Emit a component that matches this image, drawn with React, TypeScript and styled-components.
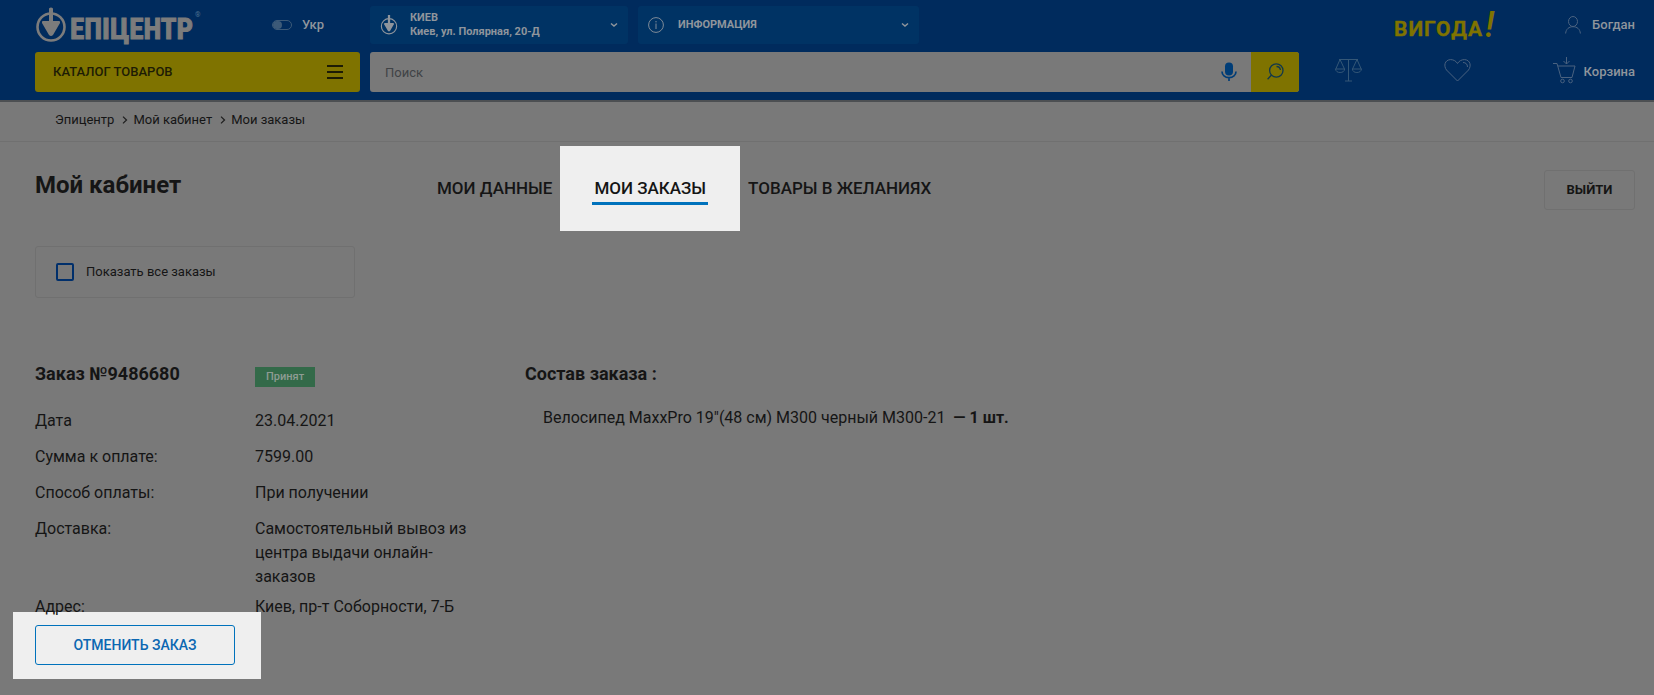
import React from "react";
import styled, { createGlobalStyle } from "styled-components";

const c = {
  page: "#797979",
  header: "#002b5d",
  panel: "#003364",
  yellow: "#7f7300",
  ink: "#151515",
  pale: "#8f959c",
  line: "#707070",
  blue: "#0072bc",
  lit: "#efefef",
};

const GlobalStyle = createGlobalStyle`
  * { box-sizing: border-box; }
  body {
    margin: 0;
    background: ${c.page};
    color: ${c.ink};
    font-family: Roboto, "Noto Sans", sans-serif;
    font-size: 16px;
    line-height: 24px;
  }
  a { color: inherit; text-decoration: none; }
  button, input { font: inherit; color: inherit; }
  svg { display: block; flex: none; overflow: visible; }
`;

const Header = styled.header`
  background: ${c.header};
  padding: 6px 19px 8px 35px;
  border-bottom: 2px solid #4c4f52;
`;

const HeaderRow = styled.div<{ $height: number }>`
  display: flex;
  align-items: center;
  gap: 10px;
  height: ${(p) => p.$height}px;
  & + & { margin-top: 8px; }
`;

const Brand = styled.div`
  width: 325px;
  flex: none;
  display: flex;
  align-items: center;
  justify-content: space-between;
  padding-right: 36px;
`;

const Language = styled.a`
  display: flex;
  align-items: center;
  gap: 10px;
  font-size: 13px;
  font-weight: 500;
  color: ${c.pale};
`;

const Toggle = styled.span`
  width: 20px;
  height: 10px;
  border: 1px solid #3c5a78;
  border-radius: 5px;
  &::before {
    content: "";
    display: block;
    width: 9px;
    height: 8px;
    border-radius: 5px;
    background: #3c5a78;
  }
`;

const HeaderPicker = styled.button<{ $width: number; $gap: number }>`
  width: ${(p) => p.$width}px;
  height: 38px;
  display: flex;
  align-items: center;
  gap: ${(p) => p.$gap}px;
  padding: 0 10px;
  border: 0;
  border-radius: 3px;
  background: ${c.panel};
  color: ${c.pale};
  font-size: 11px;
  font-weight: 700;
  line-height: 14px;
  text-align: left;
`;

const PickerText = styled.span`
  flex: 1;
`;

const Spacer = styled.div`
  flex: 1;
`;

const Deal = styled.a`
  margin-right: 58px;
`;

const UserLink = styled.a<{ $gap: number }>`
  display: flex;
  align-items: center;
  gap: ${(p) => p.$gap}px;
  font-size: 13px;
  font-weight: 500;
  color: ${c.pale};
`;

const CatalogButton = styled.button`
  width: 325px;
  height: 40px;
  flex: none;
  display: flex;
  align-items: center;
  justify-content: space-between;
  padding: 0 17px 0 18px;
  border: 0;
  border-radius: 3px;
  background: ${c.yellow};
  color: #1d1c05;
  font-size: 13px;
  font-weight: 500;
`;

const Search = styled.form`
  flex: 1;
  height: 40px;
  display: flex;
  align-items: center;
  border-radius: 3px;
  background: ${c.page};
  overflow: hidden;
`;

const SearchInput = styled.input`
  flex: 1;
  min-width: 0;
  height: 40px;
  padding: 0 15px;
  border: 0;
  background: transparent;
  font-size: 13px;
  &::placeholder { color: #404346; opacity: 1; }
`;

const IconButton = styled.button<{ $width: number; $fill?: string }>`
  width: ${(p) => p.$width}px;
  height: 40px;
  display: flex;
  align-items: center;
  justify-content: center;
  padding: 0 0 1px;
  border: 0;
  background: ${(p) => p.$fill || "transparent"};
`;

const Shortcuts = styled.nav`
  width: 326px;
  flex: none;
  height: 40px;
  display: flex;
  align-items: center;
  justify-content: space-between;
  padding: 0 0 0 26px;
  svg { margin-bottom: 4px; }
`;

const Breadcrumbs = styled.nav`
  display: flex;
  align-items: center;
  height: 40px;
  padding: 0 55px 4px;
  border-bottom: 1px solid ${c.line};
  font-size: 13px;
  gap: 8px;
`;

const Crumb = styled.a`
  display: flex;
  align-items: center;
  gap: 5px;
`;

const Main = styled.main`
  padding: 0 19px 30px 35px;
  isolation: isolate;
`;

const CabinetBar = styled.div`
  display: flex;
  height: 98px;
  align-items: center;
  padding-bottom: 2px;
`;

const Title = styled.h1`
  width: 402px;
  margin: 0 0 10px;
  font-size: 24px;
  line-height: 32px;
  font-weight: 700;
`;

const Tabs = styled.nav`
  flex: 1;
  display: flex;
  align-items: center;
  padding-bottom: 4px;
`;

const Tab = styled.a`
  font-size: 17px;
  font-weight: 500;
  white-space: nowrap;
`;

const ActiveTab = styled(Tab)`
  height: 85px;
  margin: 0 8px;
  padding: 30px 32px 0;
  background: ${c.lit};
  span {
    display: block;
    padding: 0 2px 2px;
    border-bottom: 3px solid ${c.blue};
  }
`;

const ExitButton = styled.button`
  width: 91px;
  height: 40px;
  border: 1px solid ${c.line};
  border-radius: 3px;
  background: transparent;
  font-size: 13px;
  font-weight: 700;
`;

const ShowAll = styled.label`
  width: 320px;
  height: 52px;
  margin-top: 6px;
  padding: 0 20px;
  display: flex;
  align-items: center;
  gap: 12px;
  border: 1px solid ${c.line};
  border-radius: 3px;
  font-size: 13px;
`;

const Checkbox = styled.input`
  appearance: none;
  width: 18px;
  height: 18px;
  margin: 0;
  border: 2px solid #002f6b;
  border-radius: 2px;
`;

const Order = styled.section`
  display: grid;
  grid-template-columns: 220px 220px 1fr;
  margin-top: 64px;
`;

const OrderHeading = styled.h2`
  margin: 0;
  font-size: 18px;
  line-height: 24px;
  font-weight: 700;
`;

const Status = styled.span`
  justify-self: start;
  height: 20px;
  margin-top: 5px;
  padding: 0 11px;
  background: #336a49;
  color: #8f9c94;
  font-size: 11px;
  line-height: 19px;
  font-weight: 500;
`;

const Facts = styled.dl`
  grid-column: 1 / 3;
  margin: 0;
  padding-top: 22px;
`;

const Fact = styled.div`
  display: grid;
  grid-template-columns: 220px 220px;
  min-height: 36px;
  padding-bottom: 6px;
  dd { margin: 0; }
  &:last-child { min-height: 30px; }
`;

const Items = styled.ul`
  margin: 0;
  padding: 19px 0 0 68px;
  list-style: none;
  b { margin-left: 4px; }
`;

const ItemsHeading = styled(OrderHeading)`
  padding-left: 50px;
`;

const CancelButton = styled.button`
  position: relative;
  width: 200px;
  height: 40px;
  border: 1px solid ${c.blue};
  border-radius: 3px;
  background: ${c.lit};
  color: #0b67b2;
  font-size: 14px;
  font-weight: 500;
  &::before {
    content: "";
    position: absolute;
    z-index: -1;
    inset: -14px -27px -15px -23px;
    background: ${c.lit};
  }
`;

const Trowel = ({ size, color, width }: { size: number; color: string; width: number }) => (
  <svg width={size} height={(size * 36) / 32} viewBox="0 0 32 36" fill="none" stroke={color}>
    <circle cx="16" cy="20" r="13.6" strokeWidth={width} />
    <path d="M14 0h4v14h6l1 2-7.5 13h-3L7 16l1-2h6z" fill={color} stroke="none" />
  </svg>
);

const Logo = () => (
  <svg width="166" height="36" viewBox="0 0 166 36" role="img" aria-label="Епіцентр">
    <g fill="none" stroke="#7c7c7c">
      <circle cx="16" cy="20" r="13.5" strokeWidth="2.6" />
      <path d="M14 1.500q2-2 4 0V14h6q1.500 0 1 2L18 28q-2 2-4 0L7 16q-.5-2 1-2h6z" fill="#7c7c7c" stroke="none" />
    </g>
    <text x="35" y="32" fill="#7c7c7c" stroke="#7c7c7c" strokeWidth="1" fontSize="29" fontWeight="700" fontFamily="'Liberation Sans Narrow','Roboto Condensed',Roboto,sans-serif">
      ЕПІЦЕНТР
    </text>
    <text x="160" y="10" fill="#4c7090" fontSize="7" fontFamily="Roboto,sans-serif">®</text>
  </svg>
);

const DealLogo = () => (
  <svg width="104" height="38" viewBox="0 0 104 38" role="img" aria-label="Вигода!">
    <g fill={c.yellow} fontFamily="Roboto, sans-serif" fontWeight="700">
      <text x="1" y="30" fontSize="21" letterSpacing="1" stroke={c.yellow} strokeWidth=".4">ВИГОДА</text>
      <text x="92" y="31" fontSize="36" fontStyle="italic" fontWeight="500">!</text>
    </g>
  </svg>
);

const Caret = () => (
  <svg width="8" height="6" viewBox="0 0 8 6" fill="none" stroke={c.pale} strokeWidth="1.500">
    <path d="M1 1.500 4 4l3-2.500" />
  </svg>
);

const InfoIcon = () => (
  <svg width="16" height="16" viewBox="0 0 16 16" fill="none" stroke="#7f8b98">
    <circle cx="8" cy="8" r="7.400" />
    <path d="M8 6.500V12M8 4v1.400" />
  </svg>
);

const UserIcon = () => (
  <svg width="16" height="18" viewBox="0 0 16 18" fill="none" stroke="#4a6280">
    <ellipse cx="8" cy="5.500" rx="4.500" ry="5" />
    <path d="M.6 17.500C1 13 4 10.700 8 10.700s7 2.300 7.400 6.800" />
  </svg>
);

const MenuIcon = () => (
  <svg width="16" height="14" viewBox="0 0 16 14" stroke="#1d1c05" strokeWidth="2">
    <path d="M0 1h16M0 7h16M0 13h16" />
  </svg>
);

const MicIcon = () => (
  <svg width="16" height="19" viewBox="0 0 16 19" fill="none" stroke="#003d77" strokeWidth="1.700">
    <rect x="4" y=".5" width="8" height="13" rx="4" fill="#003d77" stroke="none" />
    <path d="M1 9.500C1 13 4 15.700 8 15.700s7-2.700 7-6.200M8 15v4" />
  </svg>
);

const SearchIcon = () => (
  <svg width="17" height="17" viewBox="0 0 17 17" fill="none" stroke="#12384a" strokeWidth="1.300">
    <circle cx="9.300" cy="7.500" r="6.700" />
    <path d="M4.500 12 .6 16.300M9.500 3.500c2.300 0 3.700 1.500 3.900 3.500" />
  </svg>
);

const ScalesIcon = () => (
  <svg width="27" height="24" viewBox="0 0 27 24" fill="none" stroke="#345777">
    <path d="M4 1.500h19M13.500 1.500V23M10 23h7M5 1.500.8 11M5 1.500 9.500 11M22 1.500 17.500 11M22 1.500 26.200 11" />
    <path d="M.5 11h9.200c-.4 2.400-2 3.500-4.600 3.500S.9 13.400.5 11zM17.300 11h9.200c-.4 2.400-2 3.500-4.600 3.500s-4.200-1.100-4.600-3.500z" />
  </svg>
);

const HeartIcon = () => (
  <svg width="27" height="23" viewBox="0 0 27 23" fill="none" stroke="#4a6280">
    <path d="M13.500 22 2.500 11C-.5 7 .5 1 6.500.6c3 0 5.500 1.400 7 3.900 1.500-2.500 4-3.900 7-3.900 6 .4 7 6.400 4 10.400z" />
    <path d="M19 3.500c2.600 0 4.500 1.500 4.500 4.500" />
  </svg>
);

const CartIcon = () => (
  <svg width="23" height="27" viewBox="0 0 23 27" fill="none" stroke="#4a6280">
    <path d="M0 6.500h4l4 14h11l3-11.500H5M13.500 0v7M10.500 4l3 3 3-3" />
    <circle cx="9.500" cy="24" r="1.800" />
    <circle cx="17.500" cy="24" r="1.800" />
  </svg>
);

const Chevron = () => (
  <svg width="6" height="8" viewBox="0 0 6 8" fill="none" stroke="#202020" strokeWidth="1.300">
    <path d="m1 .6 3.500 3.400L1 7.400" />
  </svg>
);

const facts = [
  ["Дата", "23.04.2021"],
  ["Сумма к оплате:", "7599.00"],
  ["Способ оплаты:", "При получении"],
  ["Доставка:", "Самостоятельный вывоз из центра выдачи онлайн-заказов"],
  ["Адрес:", "Киев, пр-т Соборности, 7-Б"],
];

export default function App() {
  return (
    <>
      <GlobalStyle />
      <Header>
        <HeaderRow $height={38}>
          <Brand>
            <a href="#home"><Logo /></a>
            <Language href="#ukr"><Toggle />Укр</Language>
          </Brand>
          <HeaderPicker type="button" $width={258} $gap={12}>
            <Trowel size={18} color={c.pale} width={2} />
            <PickerText>КИЕВ<br />Киев, ул. Полярная, 20-Д</PickerText>
            <Caret />
          </HeaderPicker>
          <HeaderPicker type="button" $width={281} $gap={14}>
            <InfoIcon />
            <PickerText>ИНФОРМАЦИЯ</PickerText>
            <Caret />
          </HeaderPicker>
          <Spacer />
          <Deal href="#deals"><DealLogo /></Deal>
          <UserLink href="#user" $gap={11}><UserIcon />Богдан</UserLink>
        </HeaderRow>
        <HeaderRow $height={40}>
          <CatalogButton type="button">КАТАЛОГ ТОВАРОВ<MenuIcon /></CatalogButton>
          <Search onSubmit={(e) => e.preventDefault()}>
            <SearchInput type="text" placeholder="Поиск" aria-label="Поиск" />
            <IconButton type="button" $width={44} aria-label="Голосовой поиск"><MicIcon /></IconButton>
            <IconButton type="submit" $width={48} $fill={c.yellow} aria-label="Найти"><SearchIcon /></IconButton>
          </Search>
          <Shortcuts>
            <a href="#compare" aria-label="Сравнение"><ScalesIcon /></a>
            <a href="#wishes" aria-label="Желания"><HeartIcon /></a>
            <UserLink href="#cart" $gap={8}><CartIcon />Корзина</UserLink>
          </Shortcuts>
        </HeaderRow>
      </Header>
      <Breadcrumbs>
        <Crumb href="#home">Эпицентр</Crumb>
        <Crumb href="#cabinet"><Chevron />Мой кабинет</Crumb>
        <Crumb href="#orders"><Chevron />Мои заказы</Crumb>
      </Breadcrumbs>
      <Main>
        <CabinetBar>
          <Title>Мой кабинет</Title>
          <Tabs>
            <Tab href="#data">МОИ ДАННЫЕ</Tab>
            <ActiveTab href="#orders"><span>МОИ ЗАКАЗЫ</span></ActiveTab>
            <Tab href="#wishes">ТОВАРЫ В ЖЕЛАНИЯХ</Tab>
          </Tabs>
          <ExitButton type="button">ВЫЙТИ</ExitButton>
        </CabinetBar>
        <ShowAll>
          <Checkbox type="checkbox" />
          Показать все заказы
        </ShowAll>
        <Order>
          <OrderHeading>Заказ №9486680</OrderHeading>
          <Status>Принят</Status>
          <ItemsHeading>Состав заказа :</ItemsHeading>
          <Facts>
            {facts.map(([name, value]) => (
              <Fact key={name}>
                <dt>{name}</dt>
                <dd>{value}</dd>
              </Fact>
            ))}
          </Facts>
          <Items>
            <li>Велосипед MaxxPro 19"(48 см) M300 черный M300-21 <b>— 1 шт.</b></li>
          </Items>
        </Order>
        <CancelButton type="button">ОТМЕНИТЬ ЗАКАЗ</CancelButton>
      </Main>
    </>
  );
}
